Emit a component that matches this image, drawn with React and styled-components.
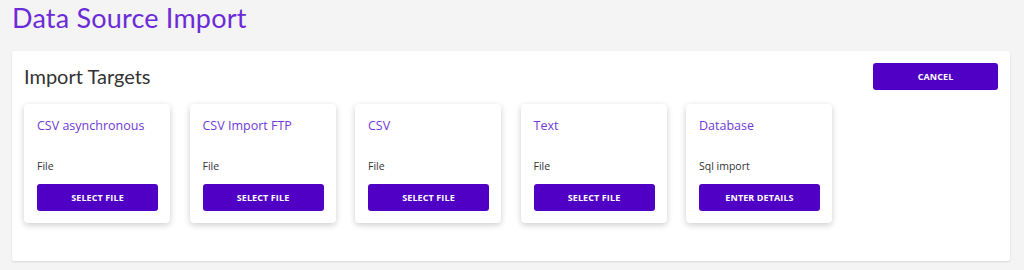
import React from 'react';
import styled, { createGlobalStyle } from 'styled-components';

const GlobalStyle = createGlobalStyle`
  body {
    margin: 0;
    background: #f4f4f4;
    font-family: "Open Sans", "Liberation Sans", sans-serif;
  }
`

const Root = styled.div`
  width: 1024px;
  height: 270px;
  padding: 0 14px 0 12px;
  box-sizing: border-box;
  overflow: hidden;
`

const Title = styled.h1`
  margin: 0;
  padding-top: 2px;
  height: 49px;
  font-family: "Lato", "Liberation Sans", sans-serif;
  font-weight: 400;
  font-size: 27px;
  letter-spacing: 0.2px;
  line-height: 32px;
  color: #6c2bd8;
`

const Panel = styled.section`
  background: #fff;
  border-radius: 2px;
  box-shadow: 0 1px 2px rgba(0, 0, 0, 0.12);
  padding: 12px 12px 38px 12px;
`

const PanelHeader = styled.div`
  display: flex;
  justify-content: space-between;
  align-items: flex-start;
  height: 41px;
`

const PanelTitle = styled.h2`
  margin: 0;
  padding-top: 1px;
  font-family: "Lato", "Liberation Sans", sans-serif;
  font-weight: 400;
  font-size: 20px;
  line-height: 24px;
  color: #333;
`

const Button = styled.button`
  width: ${props => props.width || '100%'};
  height: 27px;
  flex-shrink: 0;
  border: none;
  border-radius: 3px;
  background: #5000c4;
  color: #fff;
  font-family: "Open Sans", "Liberation Sans", sans-serif;
  font-weight: 700;
  font-size: 9px;
  letter-spacing: 0.1px;
  text-transform: uppercase;
  cursor: pointer;
`

const Cards = styled.div`
  display: flex;
  gap: 19.5px;
`

const Card = styled.div`
  width: 146px;
  height: 119px;
  box-sizing: border-box;
  padding: 13px 12px 12px 13px;
  background: #fff;
  border-radius: 4px;
  box-shadow: 0 2px 6px rgba(0, 0, 0, 0.2);
  display: flex;
  flex-direction: column;
`

const CardTitle = styled.div`
  font-size: 12.5px;
  line-height: 18px;
  color: #6f3ad9;
  height: 42px;
`

const CardType = styled.div`
  font-size: 10.5px;
  line-height: 14px;
  color: #333;
  margin-bottom: 11px;
`

const targets = [
  { name: 'CSV asynchronous', type: 'File', action: 'Select file' },
  { name: 'CSV Import FTP', type: 'File', action: 'Select file' },
  { name: 'CSV', type: 'File', action: 'Select file' },
  { name: 'Text', type: 'File', action: 'Select file' },
  { name: 'Database', type: 'Sql import', action: 'Enter details' },
]

export default function App() {
  return (
    <Root>
      <GlobalStyle />
      <Title>Data Source Import</Title>
      <Panel>
        <PanelHeader>
          <PanelTitle>Import Targets</PanelTitle>
          <Button width="125px">Cancel</Button>
        </PanelHeader>
        <Cards>
          {targets.map(t => (
            <Card key={t.name}>
              <CardTitle>{t.name}</CardTitle>
              <CardType>{t.type}</CardType>
              <Button>{t.action}</Button>
            </Card>
          ))}
        </Cards>
      </Panel>
    </Root>
  )
}
